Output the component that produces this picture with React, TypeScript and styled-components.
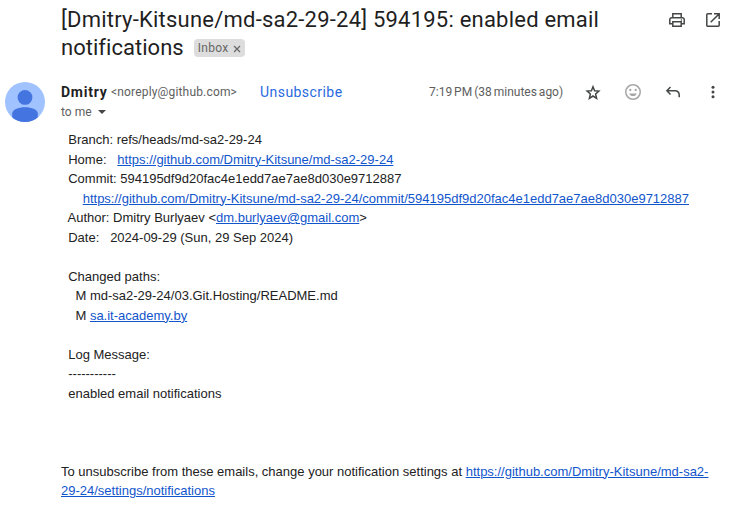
import React from "react";
import styled, { createGlobalStyle } from "styled-components";

const GlobalStyle = createGlobalStyle`
  * { box-sizing: border-box; }
  body { margin: 0; background: #fff; }
`;

const Page = styled.main`
  width: 729px;
  height: 522px;
  overflow: hidden;
  background: #fff;
  font-family: Roboto, sans-serif;
  color: #1f1f1f;
`;

const SubjectBar = styled.header`
  display: flex;
  justify-content: space-between;
  height: 82px;
  padding: 6px 6px 0 61px;
`;

const Subject = styled.h1`
  margin: 0;
  font-size: 22px;
  font-weight: 400;
  line-height: 28px;
`;

const SubjectLine = styled.div<{ $spacing: number }>`
  display: flex;
  align-items: center;
  white-space: nowrap;
  letter-spacing: ${(p) => p.$spacing}px;
`;

const Label = styled.span`
  display: flex;
  align-items: center;
  gap: 4px;
  width: 51px;
  height: 18px;
  margin-left: 10px;
  padding: 0 4px;
  border-radius: 4px;
  background: #ddd;
  color: #666;
  font-size: 12px;
  line-height: 18px;
  letter-spacing: 0.3px;
`;

const IconRow = styled.div<{ $gap: number }>`
  display: flex;
  align-items: center;
  gap: ${(p) => p.$gap}px;
  height: 20px;
`;

const SubjectActions = styled(IconRow)`
  margin-top: 4px;
`;

const Icon = styled.svg<{ $tone?: string }>`
  display: block;
  flex: none;
  width: 20px;
  height: 20px;
  color: ${(p) => p.$tone ?? "#444746"};
`;

const Message = styled.article`
  display: grid;
  grid-template-columns: 61px 1fr;
`;

const Avatar = styled.svg`
  display: block;
  width: 40px;
  height: 40px;
  margin-left: 5px;
`;

const SenderRow = styled.div`
  display: flex;
  align-items: center;
  height: 20px;
  padding-right: 6px;
  white-space: nowrap;
`;

const Name = styled.span`
  width: 50px;
  font-size: 14px;
  font-weight: 700;
  letter-spacing: 0.75px;
`;

const Address = styled.span`
  width: 149px;
  color: #5e5e5e;
  font-size: 12px;
  letter-spacing: 0.17px;
`;

const Unsubscribe = styled.a`
  flex: 1;
  color: #2a6ae0;
  font-size: 14px;
  letter-spacing: 0.45px;
`;

const Time = styled.span`
  width: 154px;
  color: #5e5e5e;
  font-size: 12px;
  word-spacing: -1px;
`;

const Recipient = styled.div`
  display: flex;
  align-items: center;
  gap: 6px;
  height: 20px;
  color: #5e5e5e;
  font-size: 12px;
`;

const Caret = styled.span`
  border: 4px solid transparent;
  border-top-color: #444746;
  border-bottom: 0;
`;

const Body = styled.div`
  grid-column: 2;
  padding-top: 8px;
  color: #222;
  font: 13px/19.5px "Liberation Sans", Arial, sans-serif;
`;

const Line = styled.div`
  height: 19.5px;
  white-space: pre;
`;

const Link = styled.a`
  color: #1155cc;
  text-decoration: underline;
`;

const PrintIcon = () => (
  <Icon viewBox="0 0 20 20" fill="none" stroke="currentColor" strokeWidth="1.5">
    <path d="M5.800 7V3.800h8.400V7M5.500 13.700H2.800V9.500a1.800 1.800 0 0 1 1.800-1.800h10.800a1.800 1.800 0 0 1 1.800 1.800v4.200h-2.700" />
    <path d="M5.800 11.800h8.400v4.400H5.800z" />
    <circle cx="14.400" cy="9.900" r=".75" fill="currentColor" stroke="none" />
  </Icon>
);

const OpenIcon = () => (
  <Icon viewBox="0 0 20 20" fill="none" stroke="currentColor" strokeWidth="1.5">
    <path d="M9 3.800H4.800a1 1 0 0 0-1 1v10.400a1 1 0 0 0 1 1h10.400a1 1 0 0 0 1-1V11M11 3.800h5.200V9M16 4l-8.300 8.300" />
  </Icon>
);

const StarIcon = () => (
  <Icon viewBox="0 0 20 20" fill="none" stroke="currentColor" strokeWidth="1.5">
    <path d="m10 4.800 1.600 3.900 4.300.4-3.300 2.900 1 4.300-3.600-2.300-3.600 2.300 1-4.300-3.300-2.900 4.300-.4z" />
  </Icon>
);

const SmileIcon = () => (
  <Icon viewBox="0 0 20 20" $tone="#a6a6a6">
    <circle cx="10" cy="10" r="7.250" fill="none" stroke="currentColor" strokeWidth="1.5" />
    <circle cx="7.300" cy="8" r="1.150" fill="currentColor" />
    <circle cx="12.700" cy="8" r="1.150" fill="currentColor" />
    <path d="M6.200 11.500h7.600c-.5 1.600-2 2.600-3.800 2.600s-3.300-1-3.800-2.600z" fill="currentColor" />
  </Icon>
);

const ReplyIcon = () => (
  <Icon viewBox="0 0 20 20" fill="none" stroke="currentColor" strokeWidth="1.5">
    <path d="M7.500 5 3.900 8.700l3.600 3.700M4 8.700h8.200a4 4 0 0 1 4 4v2.600" />
  </Icon>
);

const MoreIcon = () => (
  <Icon viewBox="0 0 20 20" fill="currentColor">
    <circle cx="10" cy="5.200" r="1.500" />
    <circle cx="10" cy="10" r="1.500" />
    <circle cx="10" cy="14.800" r="1.500" />
  </Icon>
);

const CloseIcon = styled.svg`
  width: 8px;
  height: 8px;
  margin-top: 2px;
  stroke: #666;
  stroke-width: 1.2;
`;

const repo = "https://github.com/Dmitry-Kitsune/md-sa2-29-24";
const commit = "594195df9d20fac4e1edd7ae7ae8d030e9712887";

export default function App() {
  return (
    <Page>
      <GlobalStyle />
      <SubjectBar>
        <Subject>
          <SubjectLine $spacing={0.22}>[Dmitry-Kitsune/md-sa2-29-24] 594195: enabled email</SubjectLine>
          <SubjectLine $spacing={0.03}>
            notifications
            <Label>
              Inbox
              <CloseIcon viewBox="0 0 8 8"><path d="m1 1 6 6m0-6L1 7" /></CloseIcon>
            </Label>
          </SubjectLine>
        </Subject>
        <SubjectActions $gap={16}>
          <PrintIcon />
          <OpenIcon />
        </SubjectActions>
      </SubjectBar>
      <Message>
        <Avatar viewBox="0 0 40 40">
          <clipPath id="disc"><circle cx="20" cy="20" r="20" /></clipPath>
          <g clipPath="url(#disc)">
            <path fill="#a0c3ff" d="M0 0h40v40H0z" />
            <circle cx="20" cy="15.400" r="7.400" fill="#4374e0" />
            <path fill="#4374e0" d="M7.200 40v-8.500c0-4 6-6.300 12.800-6.300s12.800 2.300 12.800 6.300V40z" />
          </g>
        </Avatar>
        <div>
          <SenderRow>
            <Name>Dmitry</Name>
            <Address>&lt;noreply@github.com&gt;</Address>
            <Unsubscribe>Unsubscribe</Unsubscribe>
            <Time>7:19 PM (38 minutes ago)</Time>
            <IconRow $gap={20}>
              <StarIcon />
              <SmileIcon />
              <ReplyIcon />
              <MoreIcon />
            </IconRow>
          </SenderRow>
          <Recipient>to me<Caret /></Recipient>
        </div>
        <Body>
          <Line>{"  Branch: refs/heads/md-sa2-29-24"}</Line>
          <Line>{"  Home:   "}<Link>{repo}</Link></Line>
          <Line>{"  Commit: "}{commit}</Line>
          <Line>{"      "}<Link>{`${repo}/commit/${commit}`}</Link></Line>
          <Line>{"  Author: Dmitry Burlyaev <"}<Link>dm.burlyaev@gmail.com</Link>{">"}</Line>
          <Line>{"  Date:   2024-09-29 (Sun, 29 Sep 2024)"}</Line>
          <Line />
          <Line>{"  Changed paths:"}</Line>
          <Line>{"    M md-sa2-29-24/03.Git.Hosting/README.md"}</Line>
          <Line>{"    M "}<Link>sa.it-academy.by</Link></Line>
          <Line />
          <Line>{"  Log Message:"}</Line>
          <Line>{"  -----------"}</Line>
          <Line>{"  enabled email notifications"}</Line>
          <Line />
          <Line />
          <Line />
          <Line>
            {"To unsubscribe from these emails, change your notification settings at "}
            <Link>https://github.com/Dmitry-Kitsune/md-sa2-</Link>
          </Line>
          <Line><Link>29-24/settings/notifications</Link></Line>
        </Body>
      </Message>
    </Page>
  );
}
